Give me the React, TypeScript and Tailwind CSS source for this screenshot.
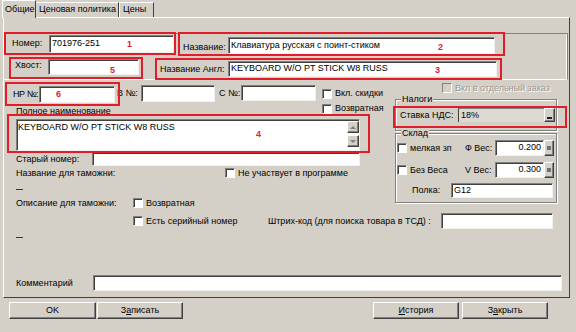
import React from 'react';

const sunken =
  'bg-white border border-t-[#808080] border-l-[#808080] border-r-[#f2f1ee] border-b-[#f2f1ee] shadow-[inset_1px_1px_0_#404040]';
const raised =
  'bg-[#d4d0c8] border border-t-white border-l-white border-r-[#404040] border-b-[#404040] shadow-[inset_-1px_-1px_0_#808080]';
const redBox = 'border-2 border-[#e11d2a]';
const etched = 'border border-[#808080] shadow-[1px_1px_0_#ffffff,inset_1px_1px_0_#ffffff]';

const Label: React.FC<{ className?: string; children: React.ReactNode }> = ({ className = '', children }) => (
  <span className={`shrink-0 whitespace-nowrap leading-[11px] ${className}`}>{children}</span>
);

const Mark: React.FC<{ className: string; children: React.ReactNode }> = ({ className, children }) => (
  <span className={`absolute text-[9px] leading-[9px] font-bold text-[#e11d2a] ${className}`}>{children}</span>
);

const Field: React.FC<{ className?: string; value?: string; right?: boolean; mark?: React.ReactNode }> = ({
  className = '',
  value,
  right,
  mark,
}) => (
  <div
    className={`${sunken} relative shrink-0 flex items-center overflow-hidden whitespace-nowrap ${
      right ? 'justify-end pr-[2px]' : 'pl-[2px]'
    } ${className}`}
  >
    {value}
    {mark}
  </div>
);

const Check: React.FC<{ label: string; className?: string }> = ({ label, className = '' }) => (
  <div className={`flex items-center shrink-0 ${className}`}>
    <span className="w-[10px] h-[10px] shrink-0 bg-white border border-t-[#808080] border-l-[#808080] border-r-white border-b-white shadow-[inset_1px_1px_0_#404040]" />
    <Label className="ml-[3px]">{label}</Label>
  </div>
);

const Dash: React.FC<{ className?: string }> = ({ className = '' }) => (
  <div className={`ml-[12px] w-[7px] h-px bg-[#2a3a70] ${className}`} />
);

const Spin = () => (
  <div className={`${raised} w-[10px] h-[16px] shrink-0 flex items-center justify-center`}>
    <span className="w-[4px] h-[4px] bg-[#707070]" />
  </div>
);

const Button: React.FC<{ className?: string; children: React.ReactNode }> = ({ className = '', children }) => (
  <div className={`${raised} h-[17px] w-[86px] flex items-center justify-center ${className}`}>{children}</div>
);

export default function App() {
  return (
    <div className="w-[576px] h-[332px] bg-[#d4d0c8] text-black text-[9px] font-['Liberation_Sans',Arial,sans-serif] overflow-hidden select-none">
      {/* tabs */}
      <div className="flex items-end h-[17px] pl-[2px]">
        <div className="relative z-10 h-[18px] -mb-px w-[34px] pl-[2px] flex items-center bg-[#d4d0c8] border-l border-t border-r border-l-white border-t-white border-r-[#404040]">
          Общие
        </div>
        <div className="h-[15px] w-[83px] pl-[3px] flex items-center border-t border-r border-t-white border-r-[#404040]">
          Ценовая политика
        </div>
        <div className="h-[15px] w-[35px] pl-[3px] flex items-center border-t border-r border-l border-l-white border-t-white border-r-[#404040]">
          Цены
        </div>
      </div>

      {/* page */}
      <div className="ml-[3px] w-[567px] h-[281px] border border-t-white border-l-white border-r-[#404040] border-b-[#404040] flex flex-col">
        {/* top frame: Номер / Название / Хвост / Англ */}
        <div className="mt-[15px] mr-px h-[47px] border-t border-r border-b border-t-[#808080] border-r-[#808080] border-b-white shadow-[inset_-1px_0_0_#ffffff]">
          <div className="-mt-[2px] h-[24px] flex items-start">
            <div className={`${redBox} w-[172px] h-[23px] pl-[6px] flex items-center`}>
              <Label className="w-[37px]">Номер:</Label>
              <Field
                className="w-[125px] h-[18px]"
                value="701976-251"
                mark={<Mark className="left-[77px] top-[4px]">1</Mark>}
              />
            </div>
            <div className={`${redBox} ml-[2px] w-[327px] h-[24px] pl-[3px] flex items-end`}>
              <Label className="w-[45px] mb-px">Название:</Label>
              <Field
                className="w-[267px] h-[17px]"
                value="Клавиатура русская с поинт-стиком"
                mark={<Mark className="left-[209px] top-[5px]">2</Mark>}
              />
            </div>
          </div>

          <div className="h-[23px] flex items-start">
            <div className={`${redBox} ml-[5px] mt-px w-[134px] h-[22px] pl-[4px] flex items-start`}>
              <Label className="w-[33px] mt-px">Хвост:</Label>
              <Field className="w-[91px] h-[16px]" mark={<Mark className="left-[61px] top-[6px]">5</Mark>} />
            </div>
            <div className={`${redBox} relative z-10 ml-[12px] mt-[2px] w-[347px] h-[22px] pl-[3px] flex items-center`}>
              <Label className="w-[68px]">Название Англ:</Label>
              <Field
                className="w-[269px] h-[16px]"
                value="KEYBOARD W/O PT STICK W8 RUSS"
                mark={<Mark className="left-[206px] top-[4px]">3</Mark>}
              />
            </div>
          </div>
        </div>

        {/* middle */}
        <div className="h-[128px] flex items-start">
          <div className="w-[386px] flex flex-col">
            <div className="h-[26px] flex items-start">
              <div className={`${redBox} relative z-10 ml-px mt-[2px] w-[115px] h-[24px] pl-[6px] flex items-center`}>
                <Label className="w-[26px] tracking-[-0.4px]">НР №:</Label>
                <Field className="w-[76px] h-[17px]" mark={<Mark className="left-[16px] top-[3px]">6</Mark>} />
              </div>
              <Label className="-ml-[3px] mt-[8px] w-[24px]">В №:</Label>
              <Field className="mt-[5px] w-[74px] h-[17px]" />
              <Label className="ml-[4px] mt-[8px] w-[22px]">С №:</Label>
              <Field className="mt-[5px] w-[75px] h-[16px]" />
              <div className="ml-[6px] mt-[8px] flex flex-col gap-[4px]">
                <Check label="Вкл. скидки" />
                <Check label="Возвратная" />
              </div>
            </div>

            <div className="ml-[12px] h-[8px] leading-[11px] whitespace-nowrap">Полное наименование</div>

            <div className={`${redBox} relative z-10 ml-[3px] w-[363px] h-[39px] pl-[7px] pt-[3px]`}>
              <div className={`${sunken} relative w-[344px] h-[32px] flex`}>
                <div className="flex-1 pl-[1px] pt-[2px] leading-[11px] whitespace-nowrap">
                  KEYBOARD W/O PT STICK W8 RUSS
                </div>
                <div className="w-[12px] pt-px flex flex-col gap-[2px]">
                  <div className={`${raised} h-[12px] flex items-center justify-center`}>
                    <span className="w-0 h-0 border-l-[3px] border-r-[3px] border-b-[3px] border-l-transparent border-r-transparent border-b-[#808080]" />
                  </div>
                  <div className={`${raised} h-[12px] flex items-center justify-center`}>
                    <span className="w-0 h-0 border-l-[3px] border-r-[3px] border-t-[3px] border-l-transparent border-r-transparent border-t-[#808080]" />
                  </div>
                </div>
                <Mark className="left-[239px] top-[10px]">4</Mark>
              </div>
            </div>

            <div className="-mt-px ml-[12px] h-[14px] flex items-center">
              <Label className="w-[76px]">Старый номер:</Label>
              <Field className="w-[268px] h-[14px]" />
            </div>

            <div className="ml-[12px] h-[14px] flex items-center">
              <Label className="w-[209px]">Название для таможни:</Label>
              <Check label="Не участвует в программе" />
            </div>

            <Dash className="mt-[9px]" />

            <div className="mt-[8px] ml-[12px] h-[10px] flex items-center">
              <Label className="w-[117px]">Описание для таможни:</Label>
              <Check label="Возвратная" />
            </div>
          </div>

          <div className="flex-1 flex flex-col">
            <div className="ml-[52px] mt-[3px] h-[10px] flex items-center">
              <span className="w-[10px] h-[10px] shrink-0 bg-[#d4d0c8] border border-t-[#808080] border-l-[#808080] border-r-white border-b-white" />
              <Label className="ml-[3px] text-[#9a978f] [text-shadow:1px_1px_0_#ffffff]">Вкл в отдельный заказ</Label>
            </div>

            <div className={`${etched} relative ml-[5px] mt-[6px] w-[162px] h-[32px]`}>
              <span className="absolute -top-[6px] left-[5px] px-px bg-[#d4d0c8] leading-[11px]">Налоги</span>
              <div className={`${redBox} relative -ml-[3px] mt-[6px] w-[174px] h-[22px] pl-[5px] flex items-start`}>
                <Label className="w-[58px] leading-[14px]">Ставка НДС:</Label>
                <div className="w-[97px] h-[14px] shrink-0 flex bg-[#dddad4] border-l border-t border-l-[#404040] border-t-[#808080]">
                  <span className="flex-1 pl-[2px] leading-[13px]">18%</span>
                  <div className={`${raised} w-[11px] h-[14px] -mt-px flex items-end justify-center pb-[2px]`}>
                    <span className="w-[5px] h-[2px] bg-[#202020]" />
                  </div>
                </div>
              </div>
            </div>

            <div className={`${etched} relative ml-[5px] mt-[2px] w-[162px] h-[70px]`}>
              <span className="absolute -top-[6px] left-[5px] px-px bg-[#d4d0c8] leading-[11px]">Склад</span>
              <div className="mt-[6px] h-[16px] flex items-center">
                <Check label="мелкая зп" className="ml-px w-[68px]" />
                <Label className="w-[30px]">Ф Вес:</Label>
                <Field className="w-[49px] h-[16px]" value="0.200" right />
                <Spin />
              </div>
              <div className="mt-[6px] h-[16px] flex items-center">
                <Check label="Без Веса" className="ml-px w-[68px]" />
                <Label className="w-[30px]">V Вес:</Label>
                <Field className="w-[49px] h-[16px]" value="0.300" right />
                <Spin />
              </div>
              <div className="mt-[5px] ml-[16px] h-[15px] flex items-center">
                <Label className="w-[39px]">Полка:</Label>
                <Field className="w-[102px] h-[15px]" value="G12" />
              </div>
            </div>
          </div>
        </div>

        {/* bottom rows */}
        <div className="mt-[5px] h-[16px] flex items-center">
          <Check label="Есть серийный номер" className="ml-[129px] w-[135px]" />
          <Label className="w-[173px]">Штрих-код (для поиска товара в ТСД) :</Label>
          <Field className="w-[112px] h-[16px]" />
        </div>

        <Dash className="mt-[8px]" />

        <div className="mt-[37px] ml-[12px] h-[16px] flex items-center">
          <Label className="w-[77px]">Комментарий</Label>
          <Field className="w-[469px] h-[16px]" />
        </div>
      </div>

      {/* buttons */}
      <div className="mt-[4px] h-[17px] flex">
        <Button className="ml-[9px] w-[87px]">OK</Button>
        <Button className="ml-px">
          З<span className="underline">а</span>писать
        </Button>
        <Button className="ml-[190px]">
          <span className="underline">И</span>стория
        </Button>
        <Button className="ml-[3px]">
          З<span className="underline">а</span>крыть
        </Button>
      </div>
    </div>
  );
}
